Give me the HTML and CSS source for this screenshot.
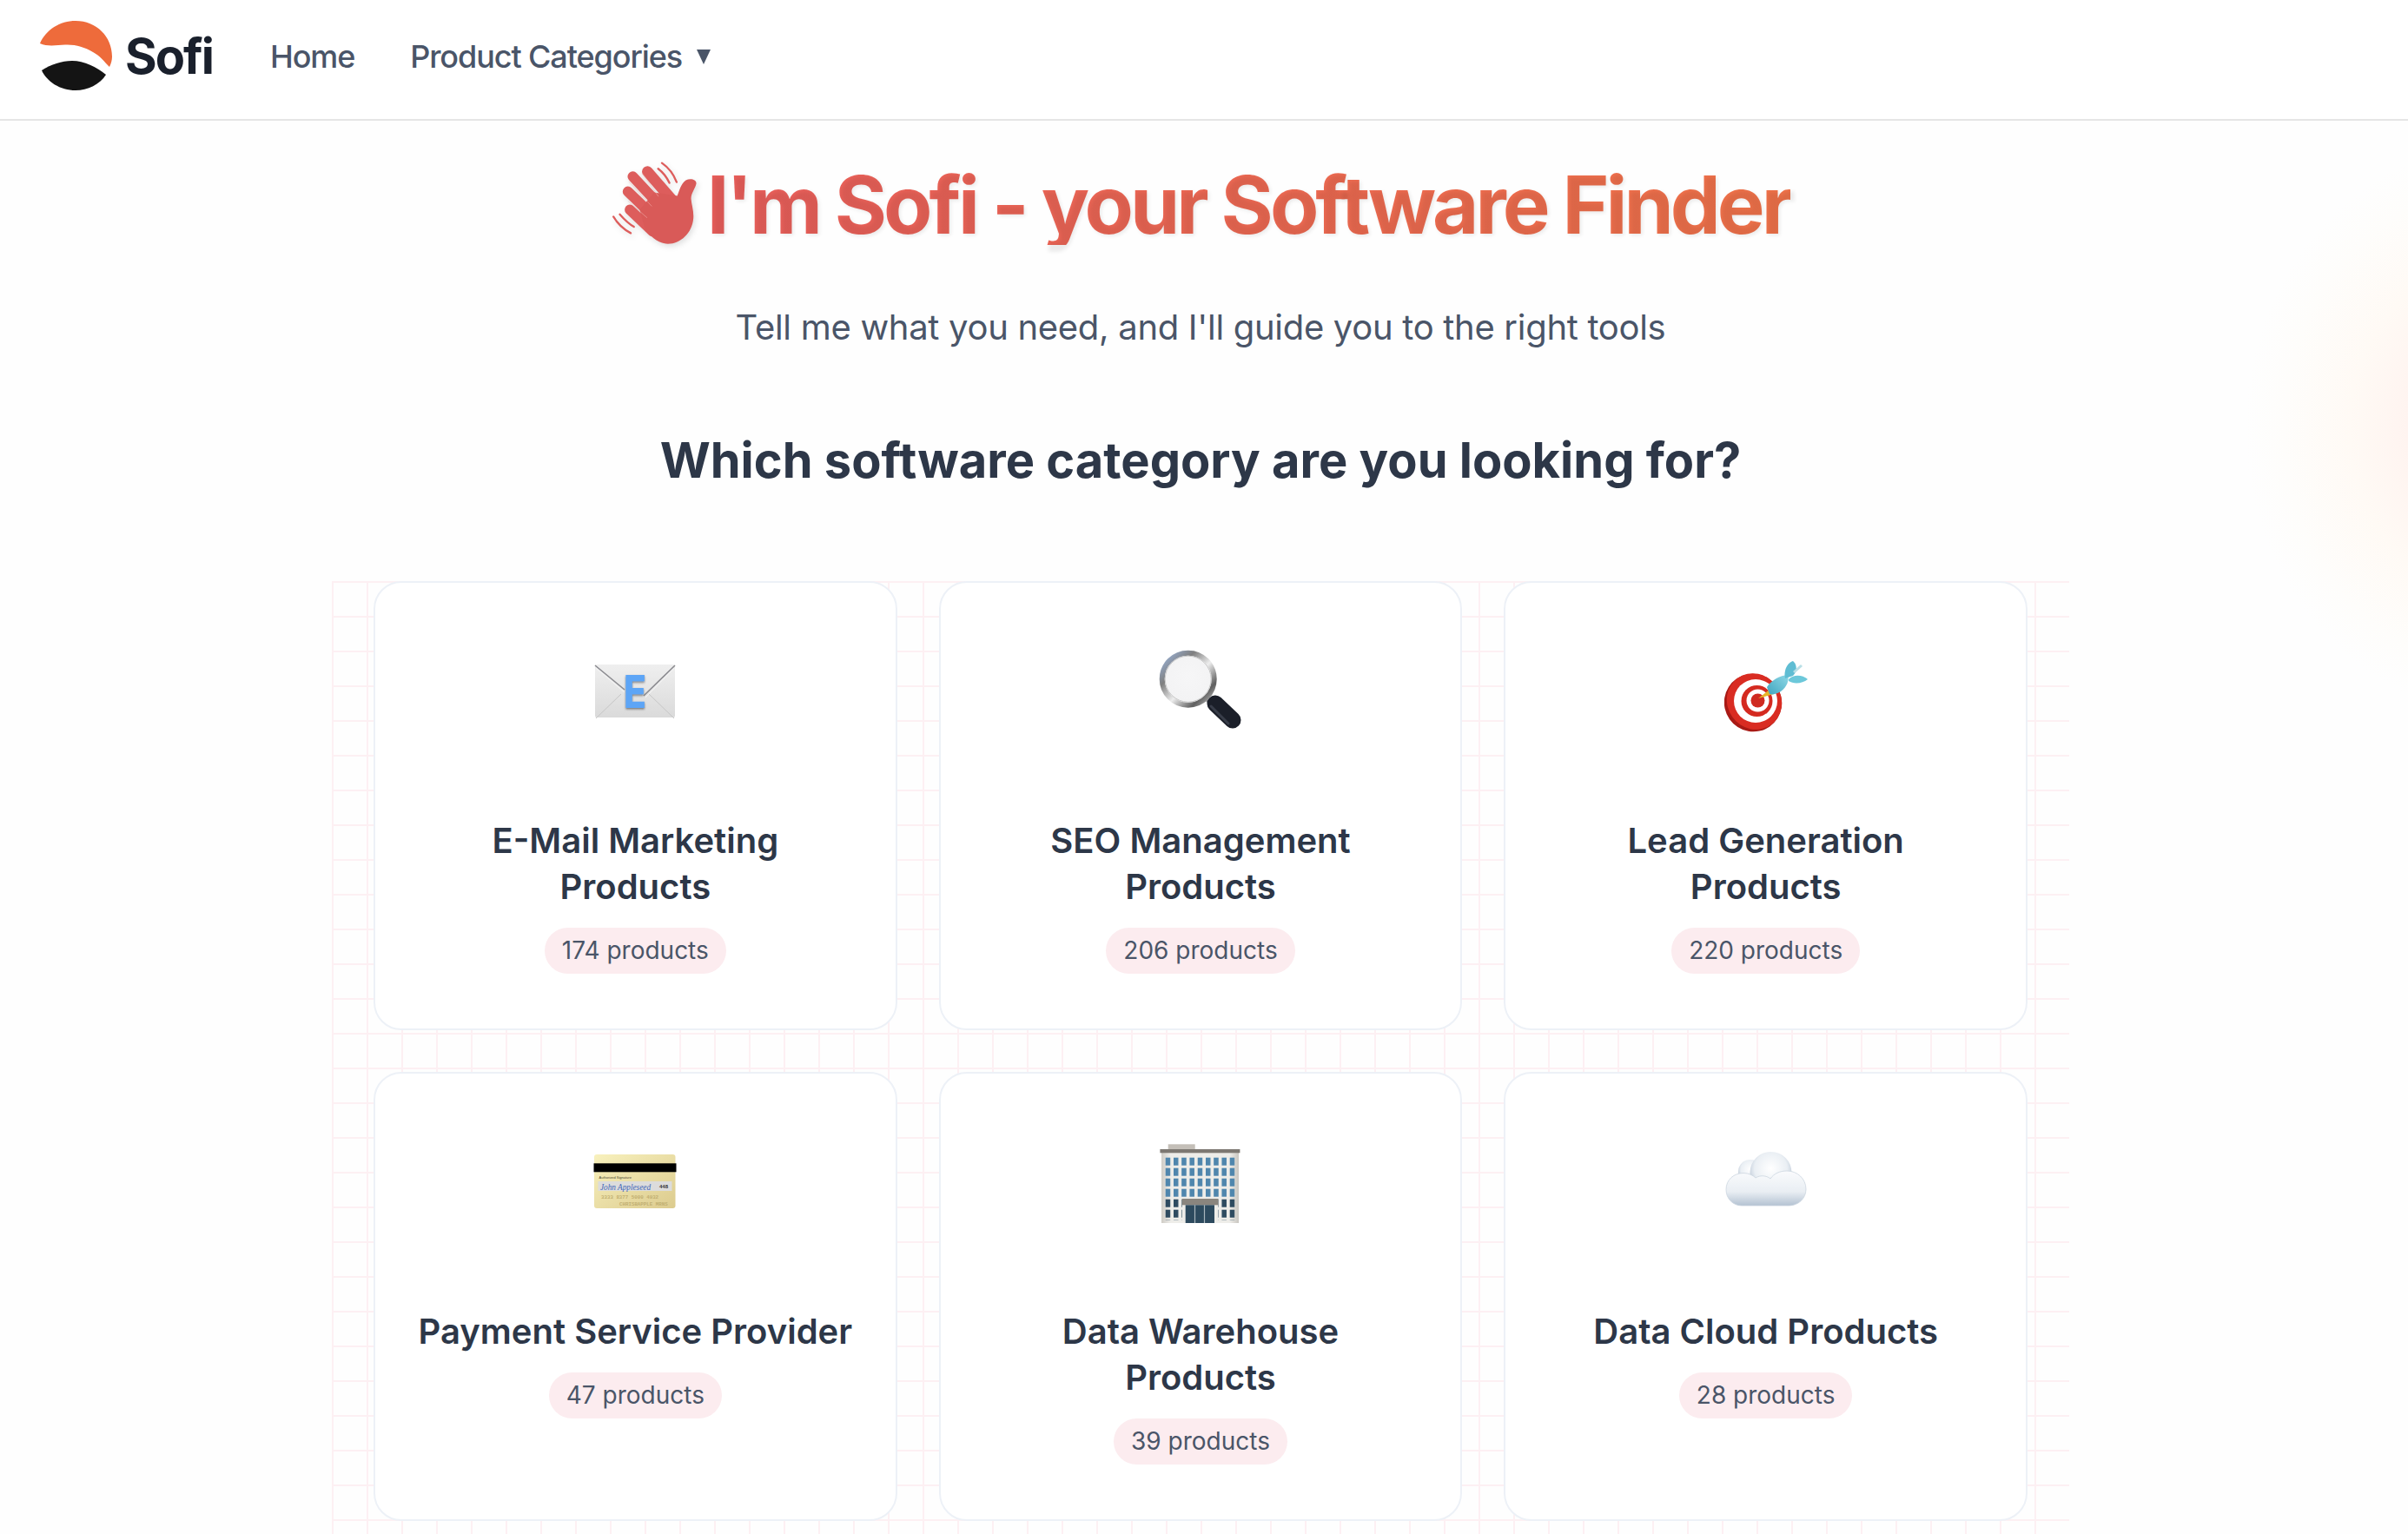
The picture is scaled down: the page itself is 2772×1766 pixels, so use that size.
FILE: index.html
```html
<!DOCTYPE html>
<html lang="en">
<head>
<meta charset="utf-8">
<title>Sofi - your Software Finder</title>
<link rel="stylesheet" href="styles.css">
</head>
<body>
<header class="navbar">
  <a class="brand" href="#">
    <svg class="brand-logo" viewBox="0 0 84 82" width="84" height="82" aria-hidden="true">
      <path fill="#ee6b3b" d="M1 26C8 10 24 0 42 0C66 0 84 18 84 41C84 45 83 49 81 53C75 47 70 40 62 36C52 30 42 27 30 27.5C20 28 10 30 1 26Z"/>
      <path fill="#141414" d="M3 57C14 50 26 46 38 46C52 46 66 53 77 62C70 73 56 80 42 80C24 80 9 70 3 57Z"/>
    </svg>
    <span class="brand-name">Sofi</span>
  </a>
  <nav class="nav-links">
    <a class="nav-link" href="#">Home</a>
    <a class="nav-link" href="#">Product Categories<span class="caret"></span></a>
  </nav>
</header>
<main class="page">
  <section class="hero">
    <h1 class="hero-title">
      <svg class="wave" viewBox="70 100 300 295" width="100" height="98" aria-hidden="true">
        <g stroke="#dd5d5c" stroke-linecap="round" fill="none">
          <path stroke-width="7" d="M234 128C250 140 264 158 273 177"/>
          <path stroke-width="7" d="M247 108C270 124 288 148 298 174"/>
          <path stroke-width="7" d="M101 286C115 302 130 318 150 329"/>
          <path stroke-width="7" d="M79 294C93 318 114 338 139 351"/>
          <path stroke-width="36" d="M146 155L235 250"/>
          <path stroke-width="38" d="M197 138L290 245"/>
          <path stroke-width="36" d="M129 207L215 290"/>
          <path stroke-width="36" d="M136 270L215 345"/>
        </g>
        <path fill="#d95a58" d="M300 222C308 205 312 180 330 168C345 160 368 165 366 180C362 198 348 212 348 232C350 255 358 275 356 300C352 350 312 388 268 388C240 388 215 368 190 342L170 270L220 210Z"/>
        <g stroke="#f3b6b2" stroke-width="1.5" fill="none">
          <path d="M178 142L235 224"/>
          <path d="M132 172L212 258"/>
          <path d="M130 240L196 298"/>
        </g>
      </svg>
      <span class="hero-text">I'm Sofi - your Software Finder</span>
    </h1>
    <p class="hero-sub">Tell me what you need, and I'll guide you to the right tools</p>
    <h2 class="hero-question">Which software category are you looking for?</h2>
  </section>
  <section class="grid">
    <article class="card">
      <div class="emoji">
        <svg viewBox="0 0 96 96" width="96" height="96" aria-hidden="true">
          <defs>
            <linearGradient id="envBg" x1="0" y1="0" x2="0" y2="1"><stop offset="0" stop-color="#efefef"/><stop offset="1" stop-color="#dadada"/></linearGradient>
            <filter id="eShadow" x="-20%" y="-20%" width="140%" height="150%"><feDropShadow dx="0" dy="1.5" stdDeviation="1" flood-color="#333" flood-opacity=".6"/></filter>
          </defs>
          <rect x="2" y="18" width="92" height="61" rx="2" fill="url(#envBg)"/>
          <path d="M3 80L32 52M93 80L64 52" stroke="#c6c6c6" stroke-width="1" fill="none"/>
          <path d="M2 19L36 47M94 19L58 54" stroke="#8b8b90" stroke-width="1.6" fill="none"/>
          <path d="M3 22L36 50M93 22L60 56" stroke="#f6f6f6" stroke-width="1" fill="none"/>
          <text class="env-letter" x="35" y="68" textLength="26" lengthAdjust="spacingAndGlyphs" filter="url(#eShadow)">E</text>
        </svg>
      </div>
      <h3 class="card-title">E-Mail Marketing Products</h3>
      <span class="badge">174 products</span>
    </article>
    <article class="card">
      <div class="emoji">
        <svg viewBox="0 0 96 96" width="96" height="96" aria-hidden="true">
          <defs>
            <linearGradient id="rim" x1="0" y1="0" x2="1" y2="1"><stop offset="0" stop-color="#9cb7e0"/><stop offset=".3" stop-color="#7f7f7f"/><stop offset=".55" stop-color="#eeeeee"/><stop offset=".8" stop-color="#5f5f5f"/><stop offset="1" stop-color="#d0d0d0"/></linearGradient>
            <radialGradient id="lens" cx=".5" cy=".45" r=".55"><stop offset="0" stop-color="#f6f6f7"/><stop offset=".85" stop-color="#f3f3f4"/><stop offset="1" stop-color="#ffffff"/></radialGradient>
          </defs>
          <path d="M56 58L66 68" stroke="#9a9a9a" stroke-width="6"/>
          <path d="M65 63L85 82" stroke="#1b1f29" stroke-width="19" stroke-linecap="round"/>
          <path d="M60 66L80 86" stroke="#454b57" stroke-width="3" stroke-linecap="round" opacity=".7"/>
          <circle cx="33.7" cy="34.7" r="30" fill="url(#lens)" stroke="url(#rim)" stroke-width="6"/>
          <circle cx="33.7" cy="34.7" r="26.5" fill="none" stroke="#c8c8c8" stroke-width="1"/>
        </svg>
      </div>
      <h3 class="card-title">SEO Management Products</h3>
      <span class="badge">206 products</span>
    </article>
    <article class="card">
      <div class="emoji">
        <svg viewBox="0 0 96 96" width="96" height="96" aria-hidden="true">
          <defs>
            <linearGradient id="dart" x1="0" y1="1" x2="1" y2="0"><stop offset="0" stop-color="#3fa5bf"/><stop offset="1" stop-color="#8fd8e6"/></linearGradient>
          </defs>
          <ellipse cx="33" cy="62" rx="33" ry="33.5" fill="#a81a15" transform="rotate(-35 33 62)"/>
          <ellipse cx="34.5" cy="60.5" rx="31" ry="33" fill="#d92c22" transform="rotate(-35 34.5 60.5)"/>
          <circle cx="36" cy="60" r="25" fill="#ffffff"/>
          <circle cx="37.500" cy="60" r="18" fill="#d42a20"/>
          <circle cx="38.500" cy="59.500" r="13" fill="#ffffff"/>
          <circle cx="38.500" cy="59.500" r="8" fill="#cf2a20"/>
          <path d="M39 57L53 46L57 52Z" fill="#e6b428"/>
          <path d="M49 44C55 35 64 31 73 30C75 36 72 44 65 49C60 52 55 53 52 52Z" fill="url(#dart)"/>
          <path d="M70 34C68 26 72 16 79 14C84 18 84 26 79 31Z" fill="#5fbdd3"/>
          <path d="M74 35C80 29 90 30 96 35C90 40 80 41 74 37Z" fill="#6cc8da"/>
          <path d="M80 27L89 19" stroke="#b9dfe6" stroke-width="3"/>
        </svg>
      </div>
      <h3 class="card-title">Lead Generation<br>Products</h3>
      <span class="badge">220 products</span>
    </article>
    <article class="card">
      <div class="emoji">
        <svg viewBox="0 0 96 96" width="96" height="96" aria-hidden="true">
          <defs>
            <linearGradient id="gold" x1="0" y1="0" x2="1" y2="1"><stop offset="0" stop-color="#f8f1bd"/><stop offset="1" stop-color="#dccb8e"/></linearGradient>
          </defs>
          <rect x="1" y="17" width="93.500" height="62" rx="3" fill="url(#gold)"/>
          <rect x="0.500" y="27.300" width="95" height="10" fill="#000"/>
          <text class="cc-label" x="6.500" y="44.500">Authorized Signature</text>
          <rect x="5.500" y="48" width="85" height="11" fill="#dcdcdc"/>
          <text class="cc-sign" x="8" y="57.500" textLength="58" lengthAdjust="spacingAndGlyphs">John Appleseed</text>
          <text class="cc-cvv" x="76" y="56">448</text>
          <text class="cc-num" x="9" y="67.500">3333 8377 5000 4932</text>
          <text class="cc-num" x="30" y="76">CHRISBAPPLE MRNS</text>
        </svg>
      </div>
      <h3 class="card-title">Payment Service Provider</h3>
      <span class="badge">47 products</span>
    </article>
    <article class="card">
      <div class="emoji">
        <svg viewBox="0 0 96 96" width="96" height="96" aria-hidden="true">
          <defs>
            <linearGradient id="wall" x1="0" y1="0" x2="1" y2="0"><stop offset="0" stop-color="#cfccc6"/><stop offset=".12" stop-color="#eeede9"/><stop offset=".88" stop-color="#eeede9"/><stop offset="1" stop-color="#c9c6c0"/></linearGradient>
            <pattern id="winTop" x="7.700" y="20.700" width="9.250" height="12" patternUnits="userSpaceOnUse"><rect width="5.500" height="9" fill="#4f86ad"/></pattern>
            <pattern id="winLow" x="7.700" y="68.700" width="9.250" height="12" patternUnits="userSpaceOnUse"><rect width="5.500" height="9" fill="#2e4b60"/></pattern>
          </defs>
          <rect x="10.700" y="5.300" width="31" height="6" fill="#c4bfb8"/>
          <rect x="3" y="15" width="89" height="81" fill="url(#wall)"/>
          <rect x="1.400" y="11" width="92" height="4.300" fill="#7d7872"/>
          <rect x="7" y="20" width="82" height="47" fill="url(#winTop)"/>
          <rect x="7" y="68" width="82" height="25" fill="url(#winLow)"/>
          <rect x="26.700" y="68" width="41.700" height="28" fill="#eeede9"/>
          <rect x="26.700" y="68" width="41.700" height="7.300" fill="#8a857e"/>
          <rect x="30.700" y="75.300" width="33.300" height="20.700" fill="#2d4a5e"/>
          <path d="M41.500 75.300V96M52.500 75.300V96" stroke="#a9b6bd" stroke-width="1.200"/>
        </svg>
      </div>
      <h3 class="card-title">Data Warehouse<br>Products</h3>
      <span class="badge">39 products</span>
    </article>
    <article class="card">
      <div class="emoji">
        <svg viewBox="0 0 96 96" width="96" height="96" aria-hidden="true">
          <defs>
            <radialGradient id="puffA" cx=".5" cy=".4" r=".6"><stop offset="0" stop-color="#ffffff"/><stop offset=".65" stop-color="#eaeff4"/><stop offset="1" stop-color="#b4c1d1"/></radialGradient>
            <linearGradient id="puffB" x1="0" y1="0" x2="0" y2="1"><stop offset="0" stop-color="#fafbfd"/><stop offset=".6" stop-color="#e9eef3"/><stop offset="1" stop-color="#b4c2d2"/></linearGradient>
          </defs>
          <circle cx="30" cy="37" r="14" fill="url(#puffA)"/>
          <circle cx="53.500" cy="38" r="24" fill="url(#puffA)"/>
          <path d="M20 76C10 76 2 68 2 57.500C2 46 11 38.500 22 38.500C28 38.500 33 41 36 44C42 40 50 42 53 45C57 39 64 36 72 36C84 36 94 45 94 57C94 68 85 76 74 76Z" fill="url(#puffB)" stroke="#ccd5e0" stroke-width=".8"/>
        </svg>
      </div>
      <h3 class="card-title">Data Cloud Products</h3>
      <span class="badge">28 products</span>
    </article>
  </section>
</main>
</body>
</html>
```

FILE: styles.css
```css
* { box-sizing: border-box; }

html, body { margin: 0; padding: 0; height: 1766px; overflow: hidden; }

body {
  font-family: Inter, "Noto Sans", sans-serif;
  background-color: #fefefe;
  background-image: radial-gradient(ellipse 300px 330px at 2885px 493px, #ffeee9 0%, #fff4f0 38%, #fffaf5 60%, #fefdfb 85%, #fefefe 100%);
  background-repeat: no-repeat;
  color: #2d3748;
}

.navbar {
  display: flex;
  align-items: center;
  height: 139px;
  padding: 0 0 8px 45px;
  background: #fff;
  border-bottom: 2px solid #e5e5e5;
}

.brand {
  display: flex;
  align-items: center;
  gap: 15px;
  text-decoration: none;
}

.brand-logo { display: block; }

.brand-name {
  font-size: 56px;
  font-weight: 700;
  letter-spacing: -2px;
  color: #1a202c;
}

.nav-links {
  display: flex;
  align-items: center;
  gap: 64px;
  margin-left: 66px;
}

.nav-link {
  display: flex;
  align-items: center;
  font-size: 36px;
  font-weight: 500;
  letter-spacing: -1.1px;
  color: #4a5568;
  text-decoration: none;
}

.caret {
  margin-left: 17px;
  margin-top: 1px;
  border-left: 8.500px solid transparent;
  border-right: 8.500px solid transparent;
  border-top: 17px solid #4a5568;
}

.page { padding-right: 8px; }

.hero { text-align: center; }

.hero-title {
  display: flex;
  justify-content: center;
  align-items: flex-start;
  gap: 11px;
  margin: 0;
  padding-top: 46px;
  height: 185px;
  font-size: 92px;
  font-weight: 700;
  line-height: 1;
}

.wave {
  flex: none;
  filter: drop-shadow(2px 3px 3px rgba(0, 0, 0, .12));
}

.hero-text {
  padding-top: 5px;
  letter-spacing: -3.95px;
  background: linear-gradient(90deg, #ea5f5c, #f0734a);
  -webkit-background-clip: text;
  background-clip: text;
  color: transparent;
  text-shadow: 2px 2px 4px rgba(0, 0, 0, .08);
}

.hero-sub {
  margin: 23px 0 0;
  font-size: 40px;
  line-height: 60px;
  letter-spacing: -0.3px;
  color: #4a5568;
}

.hero-question {
  margin: 84px 0 0;
  font-size: 56px;
  font-weight: 700;
  line-height: 78px;
  color: #2d3748;
}

.grid {
  display: grid;
  grid-template-columns: repeat(3, 1fr);
  gap: 48px;
  width: 2000px;
  margin: 100px auto 0;
  padding: 0 48px 60px;
  background-image:
    linear-gradient(#fdf0f3 2px, transparent 2px),
    linear-gradient(90deg, #fdf0f3 2px, transparent 2px);
  background-size: 40px 40px;
}

.card {
  display: flex;
  flex-direction: column;
  align-items: center;
  height: 517px;
  padding: 62px 48px;
  background: #fff;
  border: 2px solid #edf1f7;
  border-radius: 32px;
  text-align: center;
}

.emoji {
  display: flex;
  justify-content: center;
  align-items: center;
  height: 124px;
  margin-bottom: 84px;
}

.card-title {
  margin: 0;
  width: 100%;
  font-size: 40px;
  font-weight: 600;
  line-height: 53px;
  color: #2d3748;
}

.badge {
  margin-top: 21px;
  padding: 8px 20px;
  font-size: 28px;
  line-height: 37px;
  color: #4a5568;
  background: #fcecef;
  border-radius: 27px;
}

.env-letter {
  font-family: Inter, sans-serif;
  font-size: 52px;
  font-weight: 800;
  fill: #5da5f6;
}

.cc-label {
  font-family: "Liberation Sans", sans-serif;
  font-size: 4px;
  fill: #4a4530;
}

.cc-sign {
  font-family: "Liberation Serif", serif;
  font-style: italic;
  font-size: 11px;
  fill: #3f66b8;
}

.cc-cvv {
  font-family: "Liberation Sans", sans-serif;
  font-size: 6px;
  font-weight: 700;
  fill: #333;
}

.cc-num {
  font-family: "Liberation Mono", monospace;
  font-size: 5.800px;
  font-weight: 700;
  fill: #c1af72;
}
```
